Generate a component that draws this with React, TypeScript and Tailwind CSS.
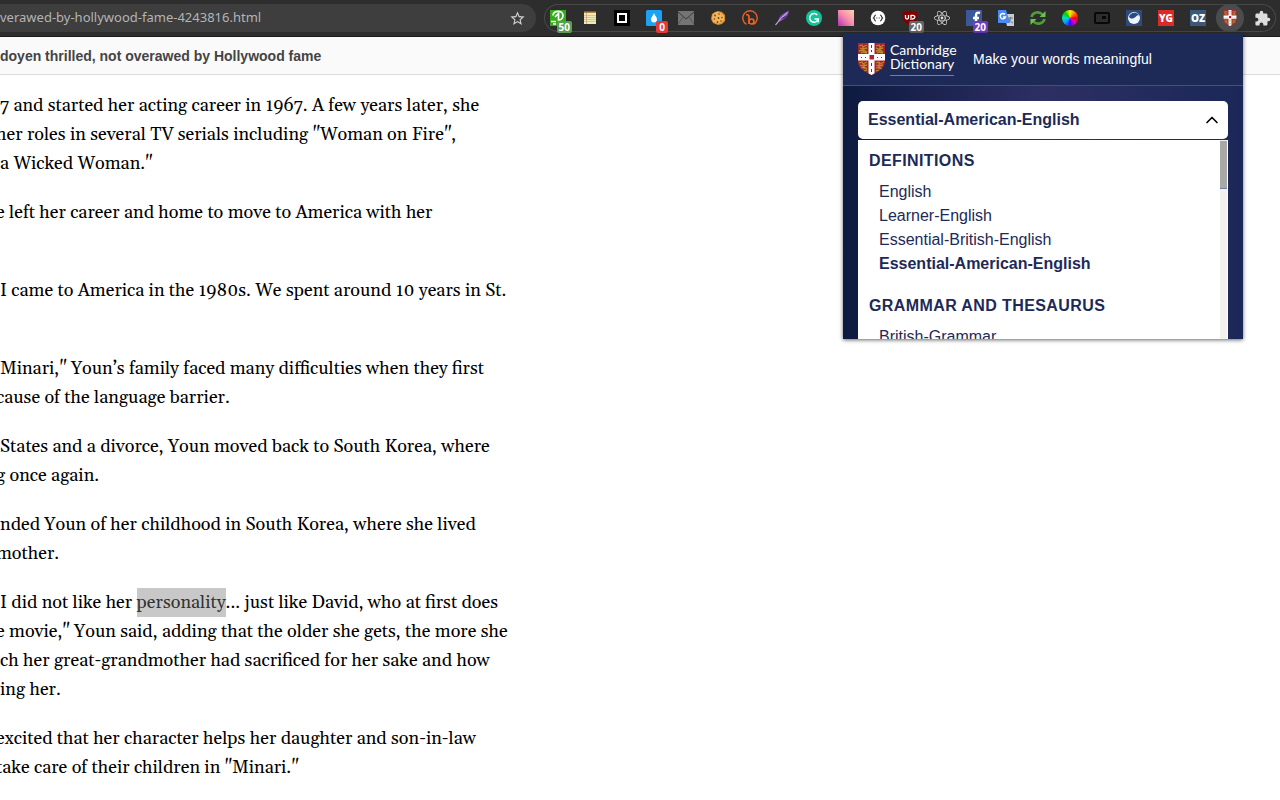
import type { ReactNode } from 'react';
import { ChevronUp } from 'lucide-react';
import { FaReact } from 'react-icons/fa';
import { MdExtension, MdStarBorder } from 'react-icons/md';

interface Extension {
  name: string;
  icon: ReactNode;
  badge?: string;
  badgeColor?: string;
}

function Crest({ className }: { className: string }) {
  return (
    <svg viewBox="0 0 27 32" className={className} aria-hidden="true">
      <clipPath id="crest-shield">
        <path d="M0 0H27V19C27 25 20 29 13.500 32C7 29 0 25 0 19Z" />
      </clipPath>
      <g clipPath="url(#crest-shield)">
        <path fill="#a8232b" d="M0 0H27V32H0Z" />
        <g fill="none" stroke="#b98a2c" strokeWidth="1.300">
          <path d="M1 3l3-1 1 2 4-2M2 5l3 1 4-1M1 8l4-1 4 2M3 10l2-1 4 1M5 3v6" />
          <path d="M18 3l3-1 1 2 4-2M18 5l3 1 4-1M18 8l4-1 3 2M19 10l2-1 4 1M22 3v6" />
          <path d="M1 20l3-1 1 2 4-2M2 22l3 1 4-1M3 25l3-1 3 2M6 28l3-1M6 20v6" />
          <path d="M18 20l3-1 1 2 4-2M18 22l3 1 4-1M18 25l3-1 3 2M18 28l3-1M21 20v6" />
        </g>
        <path fill="#fff" d="M10.500 0h6v11H27v6.500H16.500V32h-6V17.500H0V11h10.500Z" />
        <g fill="#444">
          <path d="M13 2h1v3h-1zM13 7h1v2h-1zM13 20h1v3h-1zM13 26h1v3h-1zM3 14h1v1H3zM7 14h1v1H7zM19 14h1v1h-1zM23 14h1v1h-1z" />
        </g>
        <path fill="#b5202c" d="M11.500 12h4.500v4.500h-4.500z" />
      </g>
    </svg>
  );
}

const extensions: Extension[] = [
  {
    name: 'Page saver',
    badge: '50',
    badgeColor: 'bg-[#5c9e4f]',
    icon: (
      <svg viewBox="0 0 16 16" className="size-4">
        <path fill="#35a81c" d="M0 0h16v16H0z" />
        <path
          fill="none"
          stroke="#fff"
          strokeWidth="1.700"
          d="M3 5.500C3.500 0 13 0 13 5.500 13 9 10 10 8.500 10V3.500L5 7M1 11.500h5M3 14h3"
        />
      </svg>
    ),
  },
  {
    name: 'Notes',
    icon: (
      <svg viewBox="0 0 16 16" className="size-4">
        <path fill="#eeebb4" d="M2 2h12v12H2z" />
        <path fill="#b98545" d="M2 1.500h12v1.500H2z" />
        <path stroke="#c3cf97" d="M2 5.500h12M2 7.500h12M2 9.500h12M2 11.500h12" />
        <path stroke="#d9a98c" d="M4.500 3v11" />
      </svg>
    ),
  },
  {
    name: 'Frame',
    icon: (
      <svg viewBox="0 0 16 16" className="size-4">
        <path fill="#000" d="M0 0h16v16H0z" />
        <path fill="none" stroke="#fff" strokeWidth="2" d="M4 4h8v8H4z" />
      </svg>
    ),
  },
  {
    name: 'Droplet',
    badge: '0',
    badgeColor: 'bg-[#e5383b]',
    icon: (
      <svg viewBox="0 0 16 16" className="size-4">
        <rect width="16" height="16" rx="1.500" fill="#1da1f2" />
        <path fill="#fff" d="M8 3c1 3 3 4 3 6.500a3 3 0 0 1-6 0C5 7 7 6 8 3Z" />
      </svg>
    ),
  },
  {
    name: 'Mail',
    icon: (
      <svg viewBox="0 0 16 14" className="h-3.5 w-4">
        <path fill="#747474" d="M0 0h16v14H0z" />
        <path fill="none" stroke="#3a3a3a" d="M0 1l8 7 8-7" />
        <path fill="none" stroke="#555" d="M0 13l5-7M16 13l-5-7" />
      </svg>
    ),
  },
  {
    name: 'Cookies',
    icon: (
      <svg viewBox="0 0 16 16" className="size-4">
        <path fill="#d98e2f" d="M8 1l4 1 3 3v6l-3 3-4 1-5-2-2-4 1-5 3-2Z" />
        <path fill="#f0b45a" d="M8 2l3 1 3 3v4l-3 3-4 .5-4-2L2 8l1-4 3-2Z" />
        <g fill="#7a4314">
          <circle cx="5" cy="5.500" r=".9" />
          <circle cx="9" cy="4" r=".8" />
          <circle cx="4.500" cy="9" r=".8" />
          <circle cx="8.500" cy="8" r=".9" />
          <circle cx="12" cy="7.500" r=".8" />
          <circle cx="7.500" cy="12" r=".9" />
          <circle cx="11" cy="11" r=".8" />
        </g>
      </svg>
    ),
  },
  {
    name: 'Bitly',
    icon: (
      <svg viewBox="0 0 16 16" className="size-4">
        <g fill="none" stroke="#ee6123">
          <path strokeWidth="1.400" d="M4.500 14.300A7.200 7.200 0 1 1 11.500 14.300" />
          <path strokeWidth="1.700" d="M4 4.500c2 0 3 .8 3 2.500v7" />
          <circle cx="9.500" cy="11.500" r="2.500" strokeWidth="1.700" />
        </g>
      </svg>
    ),
  },
  {
    name: 'Feather',
    icon: (
      <svg viewBox="0 0 16 16" className="size-4">
        <path fill="#7b4bb0" d="M15 .5c-.5 5-3.500 9-10.500 11.500C3.500 7 9 3 15 .5Z" />
        <path fill="none" stroke="#c9a6ea" strokeWidth="1.200" d="M13.500 2.500C9 6 5 10 1.500 15" />
        <path fill="none" stroke="#2d2d2d" strokeWidth=".8" d="M12 6.500L7.500 8.500" />
      </svg>
    ),
  },
  {
    name: 'Grammarly',
    icon: (
      <svg viewBox="0 0 16 16" className="size-4">
        <circle cx="8" cy="8" r="8" fill="#15c39a" />
        <path
          fill="none"
          stroke="#fff"
          strokeWidth="1.500"
          d="M11.200 5A4.300 4.300 0 1 0 12.200 9H8.500M12.200 9v3.200"
        />
      </svg>
    ),
  },
  {
    name: 'Gradient',
    icon: (
      <span className="size-4 bg-linear-to-tr from-[#b721b5] via-[#f58cab] to-[#ffd0b0]" />
    ),
  },
  {
    name: 'JSON',
    icon: (
      <svg viewBox="0 0 16 16" className="size-4">
        <circle cx="8" cy="8" r="7.300" fill="#fff" />
        <path
          fill="none"
          stroke="#333"
          strokeWidth="1.200"
          d="M6 5c-2 0-1 2-2.500 3C5 9 4 11 6 11M10 5c2 0 1 2 2.500 3-1.500 1-.5 3-2.500 3M6.300 8h1M8.700 8h1"
        />
      </svg>
    ),
  },
  {
    name: 'uBlock',
    badge: '20',
    badgeColor: 'bg-[#666]',
    icon: (
      <svg viewBox="0 0 16 16" className="size-4">
        <path fill="#800000" d="M8 0c2 1.500 4 2 7.500 2 0 7-1 10-7.500 14C1.500 12 .5 9 .5 2 4 2 6 1.500 8 0Z" />
        <path
          fill="none"
          stroke="#fff"
          strokeWidth="1.300"
          d="M3.500 5v2.500c0 2 3 2 3 0V5M9 10V5.500c5-1 5 3.500 1 3.500"
        />
      </svg>
    ),
  },
  { name: 'React Developer Tools', icon: <FaReact className="size-4 text-[#ddd]" /> },
  {
    name: 'Facebook',
    badge: '20',
    badgeColor: 'bg-[#7239c5]',
    icon: (
      <svg viewBox="0 0 16 16" className="size-4">
        <path fill="#3b5998" d="M0 0h16v16H0z" />
        <path fill="none" stroke="#fff" strokeWidth="2.500" d="M14 3c-3-1-4 0-4 3v10M7 8h6" />
      </svg>
    ),
  },
  {
    name: 'Translate',
    icon: (
      <svg viewBox="0 0 16 16" className="size-4">
        <path fill="#c8cdd1" d="M6 4h10v12H9Z" />
        <path fill="#4a8af4" d="M0 0h8l4 13H0z" />
        <path fill="none" stroke="#fff" strokeWidth="1.300" d="M7 4.500A2.700 2.700 0 1 0 7.500 7H5" />
        <path fill="none" stroke="#6d7780" d="M10 8h5M12.500 7v1c0 2-1 3-2 4M11 9c1 2 2 3 4 4" />
      </svg>
    ),
  },
  {
    name: 'Refresh',
    icon: (
      <svg viewBox="0 0 16 16" className="size-4">
        <g fill="none" stroke="#4c9f38" strokeWidth="2.600">
          <path d="M1.500 7c1-5 8-6 11-2.500M14.500 9c-1 5-8 6-11 2.500" />
        </g>
        <path fill="#6fbf58" d="M15.500 1v6h-6zM.5 15V9h6z" />
      </svg>
    ),
  },
  {
    name: 'Color picker',
    icon: (
      <span className="size-4 rounded-full bg-[conic-gradient(#fff200,#ff7800,#ff0000,#e000c0,#4000ff,#00a0ff,#00e0c0,#00d000,#fff200)]" />
    ),
  },
  {
    name: 'Picture in picture',
    icon: (
      <svg viewBox="0 0 16 16" className="size-4">
        <rect x="1" y="3" width="14" height="10" rx="1" fill="none" stroke="#080808" strokeWidth="2" />
        <path fill="#080808" d="M8 6h4v3H8z" />
      </svg>
    ),
  },
  {
    name: 'Sphere',
    icon: (
      <svg viewBox="0 0 16 16" className="size-4">
        <path fill="#2c4a7c" d="M0 0h16v16H0z" />
        <circle cx="8" cy="8" r="6" fill="#eef3fa" />
        <path fill="#2c4a7c" d="M3 7c2 2.500 5 1.500 6.500 0S12 5 13 5.500C11.500 1.500 4 2 3 7Z" />
      </svg>
    ),
  },
  {
    name: 'YG',
    icon: (
      <span className="flex size-4 items-center justify-center bg-[#d92b2b] font-['Open_Sans',sans-serif] text-[10px] font-extrabold text-white">
        YG
      </span>
    ),
  },
  {
    name: 'OZ',
    icon: (
      <span className="flex size-4 items-center justify-center bg-[#3a5878] font-['Open_Sans',sans-serif] text-[10px] font-extrabold text-white">
        OZ
      </span>
    ),
  },
  {
    name: 'Cambridge Dictionary',
    icon: (
      <span className="flex size-7 shrink-0 items-center justify-center rounded-full bg-[#4c4c4c]">
        <Crest className="h-4 w-3.5" />
      </span>
    ),
  },
  { name: 'Extensions', icon: <MdExtension className="size-[17px] text-[#ddd]" /> },
];

// The column is scrolled sideways, so some lines begin inside a letter.
const paragraphs: { text: ReactNode; clipped?: boolean }[][] = [
  [
    { text: '7 and started her acting career in 1967. A few years later, she' },
    { text: 'her roles in several TV serials including "Woman on Fire",', clipped: true },
    { text: 'a Wicked Woman."' },
  ],
  [
    { text: 'e left her career and home to move to America with her', clipped: true },
    { text: '\u00a0' },
  ],
  [
    { text: 'I came to America in the 1980s. We spent around 10 years in St.' },
    { text: '\u00a0' },
  ],
  [
    { text: 'Minari," Youn’s family faced many difficulties when they first' },
    { text: 'cause of the language barrier.', clipped: true },
  ],
  [
    { text: 'States and a divorce, Youn moved back to South Korea, where' },
    { text: 'g once again.', clipped: true },
  ],
  [
    { text: 'nded Youn of her childhood in South Korea, where she lived' },
    { text: 'mother.', clipped: true },
  ],
  [
    {
      text: (
        <>
          I did not like her{' '}
          <mark className="inline-block bg-[#c8c8c8] text-[#333]">personality</mark>... just
          like David, who at first does
        </>
      ),
    },
    { text: 'e movie," Youn said, adding that the older she gets, the more she', clipped: true },
    { text: 'ch her great-grandmother had sacrificed for her sake and how' },
    { text: 'ing her.' },
  ],
  [
    { text: 'excited that her character helps her daughter and son-in-law', clipped: true },
    { text: 'take care of their children in "Minari."', clipped: true },
  ],
];

const dictionaries = [
  {
    title: 'DEFINITIONS',
    items: ['English', 'Learner-English', 'Essential-British-English', 'Essential-American-English'],
  },
  { title: 'GRAMMAR AND THESAURUS', items: ['British-Grammar'] },
];

function Toolbar() {
  return (
    <header className="flex h-[37px] items-start gap-2 border-b border-[#1c1c1c] bg-[#2d2d2d] pt-1 pr-1">
      <div className="flex h-7 min-w-0 flex-1 items-center rounded-r-full bg-[#3e3e3e] pr-2.5">
        <input
          type="text"
          aria-label="Address"
          defaultValue="verawed-by-hollywood-fame-4243816.html"
          className="min-w-0 flex-1 bg-transparent font-['Noto_Sans',sans-serif] text-[13px] text-[#b4b4b4] outline-none"
        />
        <button type="button" aria-label="Bookmark this page">
          <MdStarBorder className="size-[17px] text-[#d0d0d0]" />
        </button>
      </div>
      <div className="flex h-7 shrink-0 gap-1 rounded-full ring-1 ring-[#484848] ring-inset">
        {extensions.map(ext => (
          <button
            key={ext.name}
            type="button"
            aria-label={ext.name}
            className="relative flex size-7 items-center justify-center"
          >
            {ext.icon}
            {ext.badge && (
              <span
                className={`absolute right-0 -bottom-px h-3 min-w-3 rounded-xs px-0.5 text-center font-['Open_Sans',sans-serif] text-[10px] leading-3 font-bold text-white ${ext.badgeColor}`}
              >
                {ext.badge}
              </span>
            )}
          </button>
        ))}
      </div>
    </header>
  );
}

function DictionaryPopup() {
  return (
    <aside className="absolute top-[33px] right-[37px] flex h-[306px] w-[400px] flex-col overflow-hidden bg-[#1d2a57] font-['Liberation_Sans',Arial,sans-serif] text-[#1d2a57] shadow-[0_1px_4px_rgba(0,0,0,0.6)]">
      <div className="flex h-[53px] shrink-0 items-center border-b border-[#44507a] px-[15px] pb-1 text-white">
        <Crest className="mt-1 h-8 w-[27px]" />
        <div className="ml-[5px] w-[69px] pt-1 font-[Lato,sans-serif] text-[14px] leading-[14px]">
          <p>Cambridge</p>
          <p className="w-16 border-b border-[#8e7c66] pb-1">Dictionary</p>
        </div>
        <p className="ml-[14px] pt-1 text-sm">Make your words meaningful</p>
      </div>
      <div className="flex min-h-0 flex-1 flex-col bg-linear-to-r from-[#0e1a40] via-[#2d2f63] to-[#1b2857] px-[15px] pt-[15px]">
        <button
          type="button"
          aria-expanded="true"
          aria-controls="dictionary-list"
          className="flex h-[38px] shrink-0 items-center justify-between rounded-[5px] bg-white px-2.5 text-base font-bold"
        >
          Essential-American-English
          <ChevronUp className="-mr-1 size-5 text-black" />
        </button>
        <div id="dictionary-list" className="mt-px flex min-h-0 flex-1 overflow-hidden bg-white">
          <div className="flex-1 px-[11px] pt-[9px]">
            {dictionaries.map(group => (
              <section key={group.title} className="mb-[18px]">
                <h2 className="mb-[7px] text-base leading-6 font-bold tracking-wide">{group.title}</h2>
                <ul className="pl-2.5">
                  {group.items.map(item => (
                    <li key={item}>
                      <a
                        href="#"
                        className={`block text-base leading-6 ${item === 'Essential-American-English' ? 'font-bold' : ''}`}
                      >
                        {item}
                      </a>
                    </li>
                  ))}
                </ul>
              </section>
            ))}
          </div>
          <div className="mr-px w-[7px] bg-[#f1f1f1] pt-px">
            <div className="h-12 border-b border-[#6d7f95] bg-[#a8a8a8]" />
          </div>
        </div>
      </div>
    </aside>
  );
}

export default function App() {
  return (
    <div className="relative min-h-screen overflow-hidden bg-white">
      <Toolbar />
      <div className="flex h-[38px] items-center border-b border-[#ddd] bg-[#fafafa]">
        <h1 className="font-['Liberation_Sans',Arial,sans-serif] text-sm font-bold text-[#444]">
          doyen thrilled, not overawed by Hollywood fame
        </h1>
      </div>
      <main className="space-y-5 pt-4 font-[Georgia,Gelasio,'Liberation_Serif',serif] text-lg leading-[29px] whitespace-nowrap text-black">
        {paragraphs.map((lines, i) => (
          <p key={i} className="leading-[29px]">
            {lines.map((line, j) => (
              <span key={j} className={`block ${line.clipped ? '-ml-1' : ''}`}>
                {line.text}
              </span>
            ))}
          </p>
        ))}
      </main>
      <DictionaryPopup />
    </div>
  );
}
